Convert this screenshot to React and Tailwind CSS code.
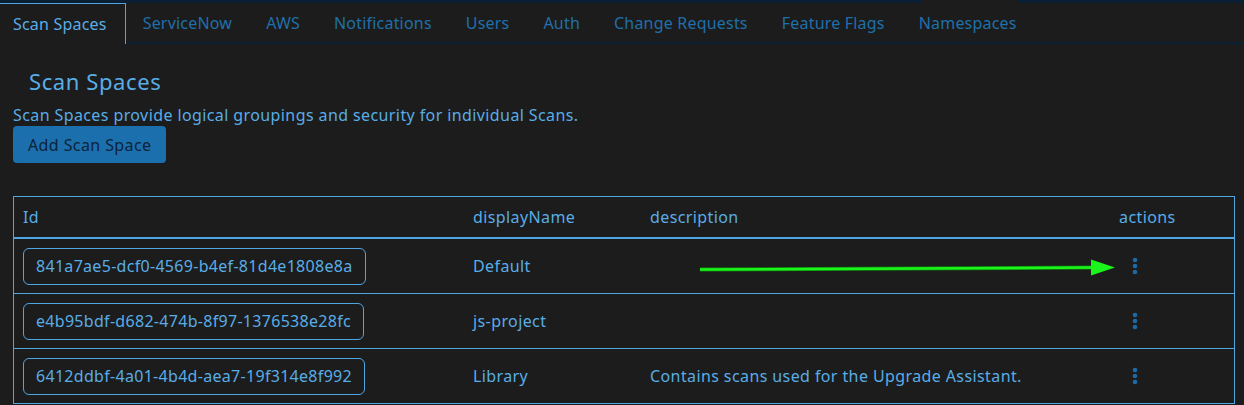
import React from 'react';

const tabs = ['ServiceNow', 'AWS', 'Notifications', 'Users', 'Auth', 'Change Requests', 'Feature Flags', 'Namespaces'];

const rows = [
  { id: '841a7ae5-dcf0-4569-b4ef-81d4e1808e8a', name: 'Default', description: '' },
  { id: 'e4b95bdf-d682-474b-8f97-1376538e28fc', name: 'js-project', description: '' },
  { id: '6412ddbf-4a01-4b4d-aea7-19f314e8f992', name: 'Library', description: 'Contains scans used for the Upgrade Assistant.' },
];

function DotsIcon() {
  return (
    <svg width="6" height="18" viewBox="0 0 6 18" className="text-[#1d6ba6]">
      <circle cx="3" cy="3" r="2.3" fill="currentColor" />
      <circle cx="3" cy="9" r="2.3" fill="currentColor" />
      <circle cx="3" cy="15" r="2.3" fill="currentColor" />
    </svg>
  );
}

function Tabs() {
  return (
    <div className="flex flex-col">
      <div className="flex h-[3px]">
        <div className="w-[921px] bg-[#0a1f34]" />
        <div className="w-[96px]" />
        <div className="flex-1 bg-[#0a1f34]" />
      </div>
      <div className="flex h-[41px] text-[16px] tracking-[0.2px]">
        <div className="flex items-center pl-[13px] pr-[18px] border-t border-r border-[#4ea5e2] text-[#59ade6]">
          Scan Spaces
        </div>
        {tabs.map((t) => (
          <div key={t} className="flex items-center px-[17px] border-b-2 border-[#0c2136] text-[#1f70aa]">
            {t}
          </div>
        ))}
        <div className="flex-1 border-b-2 border-[#0c2136]" />
      </div>
    </div>
  );
}

export default function App() {
  return (
    <div
      className="relative min-h-[405px] w-full bg-[#1c1c1c] text-[#59ade6] overflow-hidden"
      style={{ fontFamily: '"Noto Sans", "Open Sans", sans-serif' }}
    >
      <Tabs />

      <main className="px-[13px]">
        <h2 className="mt-[23px] ml-4 text-[22px] leading-[28px] tracking-[0.6px]">Scan Spaces</h2>
        <p className="mt-[10px] text-[16px] leading-[20px] tracking-[0.4px]">
          Scan Spaces provide logical groupings and security for individual Scans.
        </p>
        <button className="mt-px h-[37px] px-[15px] rounded bg-[#1b6fad] text-[#0c2338] text-[16px] tracking-[0.4px]">
          Add Scan Space
        </button>

        <div className="mt-[33px] w-[1222px] border-x border-t border-[#4ea5e2] text-[16px] tracking-[0.4px]">
          <div className="grid grid-cols-[450px_177px_469px_1fr] h-[42px] items-center border-b-2 border-[#4ea5e2]">
            <div className="pl-[9px]">Id</div>
            <div className="pl-[9px]">displayName</div>
            <div className="pl-[9px]">description</div>
            <div className="pl-[9px]">actions</div>
          </div>
          {rows.map((r) => (
            <div key={r.id} className="grid grid-cols-[450px_177px_469px_1fr] h-[55px] items-center border-b border-[#4ea5e2]">
              <div className="pl-[9px]">
                <span className="inline-flex items-center h-[37px] px-3 rounded-md border border-[#4ea5e2] tracking-[0.3px]">
                  {r.id}
                </span>
              </div>
              <div className="pl-[9px]">{r.name}</div>
              <div className="pl-[9px]">{r.description}</div>
              <div className="pl-[22px] flex items-center">
                <DotsIcon />
              </div>
            </div>
          ))}
        </div>
      </main>

      <svg className="absolute left-0 top-0 pointer-events-none" width="1244" height="405">
        <line x1="700" y1="269.5" x2="1094" y2="267.5" stroke="#0b8a0b" strokeWidth="4" />
        <line x1="700" y1="269.5" x2="1094" y2="267.5" stroke="#1cf51c" strokeWidth="2.5" />
        <polygon points="1091,259.5 1115,267.5 1091,275.5" fill="#1cf51c" />
      </svg>
    </div>
  );
}
